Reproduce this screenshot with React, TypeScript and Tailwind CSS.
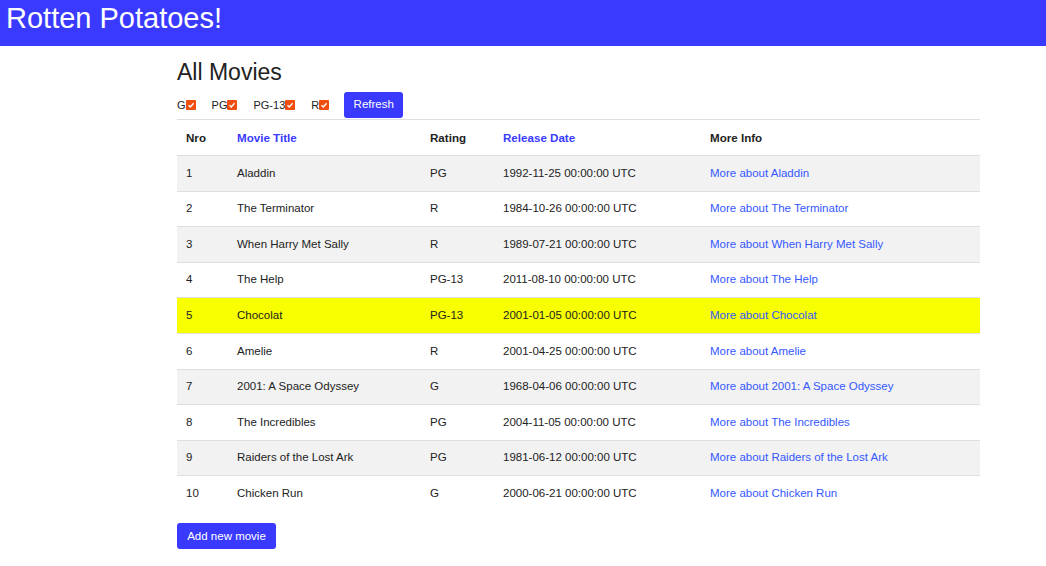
import React from "react"

const movies = [
  { id: 1, title: "Aladdin", rating: "PG", date: "1992-11-25 00:00:00 UTC" },
  { id: 2, title: "The Terminator", rating: "R", date: "1984-10-26 00:00:00 UTC" },
  { id: 3, title: "When Harry Met Sally", rating: "R", date: "1989-07-21 00:00:00 UTC" },
  { id: 4, title: "The Help", rating: "PG-13", date: "2011-08-10 00:00:00 UTC" },
  { id: 5, title: "Chocolat", rating: "PG-13", date: "2001-01-05 00:00:00 UTC" },
  { id: 6, title: "Amelie", rating: "R", date: "2001-04-25 00:00:00 UTC" },
  { id: 7, title: "2001: A Space Odyssey", rating: "G", date: "1968-04-06 00:00:00 UTC" },
  { id: 8, title: "The Incredibles", rating: "PG", date: "2004-11-05 00:00:00 UTC" },
  { id: 9, title: "Raiders of the Lost Ark", rating: "PG", date: "1981-06-12 00:00:00 UTC" },
  { id: 10, title: "Chicken Run", rating: "G", date: "2000-06-21 00:00:00 UTC" },
]

function Check() {
  return (
    <span className="inline-flex w-[10px] h-[10px] bg-[#f04e0c] rounded-[1px] items-center justify-center">
      <svg width="8" height="8" viewBox="0 0 8 8">
        <path d="M1.5 4.2 L3.3 5.9 L6.6 2.3" fill="none" stroke="white" strokeWidth="1.4" />
      </svg>
    </span>
  )
}

export default function App() {
  return (
    <div className="min-h-[566px] bg-white text-[#222] font-['Liberation_Sans',Arial,sans-serif]">
      {/* Top bar */}
      <div className="h-[46px] bg-[#3a3aff] px-[6px]">
        <h1 className="text-[29px] leading-[36px] text-white">Rotten Potatoes!</h1>
      </div>

      <div className="w-[803px] ml-[177px]">
        <h2 className="mt-[12px] text-[23px] leading-[28px] text-[#222]">All Movies</h2>

        <div className="flex items-center h-[28px] mt-[5px] text-[11px]">
          {["G", "PG", "PG-13", "R"].map((r) => (
            <label key={r} className="flex items-center mr-[16px]">
              {r}
              <Check />
            </label>
          ))}
          <button className="-ml-[1px] h-[26px] w-[59px] bg-[#3a3aff] text-white text-[11.5px] rounded-[3px]">
            Refresh
          </button>
        </div>

        <table className="w-full table-fixed border-collapse text-[11.5px]">
          <colgroup>
            <col className="w-[51px]" />
            <col className="w-[193px]" />
            <col className="w-[73px]" />
            <col className="w-[207px]" />
            <col />
          </colgroup>
          <thead>
            <tr className="border-t border-b border-[#dedfe3] text-[11.6px] font-bold">
              <th className="h-[36px] px-[9px] text-left">Nro</th>
              <th className="px-[9px] text-left text-[#3a3aff]">Movie Title</th>
              <th className="px-[9px] text-left">Rating</th>
              <th className="px-[9px] text-left text-[#3a3aff]">Release Date</th>
              <th className="px-[9px] text-left">More Info</th>
            </tr>
          </thead>
          <tbody>
            {movies.map((m, i) => (
              <tr
                key={m.id}
                className={`border-b border-[#dedfe3] last:border-b-0 ${
                  m.id === 5 ? "bg-[#f7ff00]" : i % 2 === 0 ? "bg-[#f2f2f2]" : "bg-white"
                }`}
              >
                <td className="h-[35.6px] px-[9px]">{m.id}</td>
                <td className="px-[9px]">{m.title}</td>
                <td className="px-[9px]">{m.rating}</td>
                <td className="px-[9px]">{m.date}</td>
                <td className="px-[9px]">
                  <a href="#" className="text-[#3558ff]">More about {m.title}</a>
                </td>
              </tr>
            ))}
          </tbody>
        </table>

        <button className="mt-[12px] h-[26px] w-[99px] bg-[#3a3aff] text-white text-[11.5px] rounded-[3px]">
          Add new movie
        </button>
      </div>
    </div>
  )
}
